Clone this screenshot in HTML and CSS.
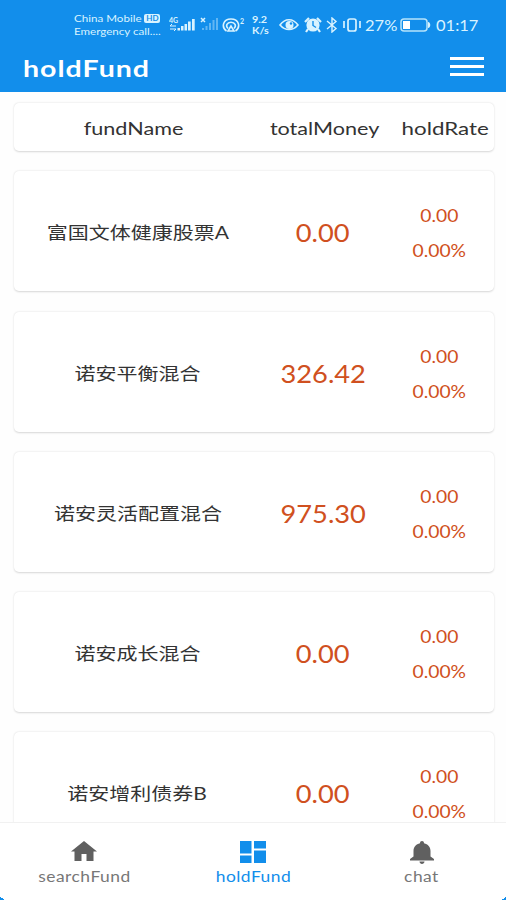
FILE: index.html
```html
<!DOCTYPE html>
<html lang="zh">

<head>
    <meta charset="UTF-8">
    <meta name="viewport" content="width=device-width, initial-scale=1.0">
    <title>holdFund</title>
    <link rel="stylesheet" href="styles.css">
</head>

<body>
    <header class="app-header">
        <div class="status-bar">
            <div class="carrier">
                <div class="carrier-line"><span class="t">China Mobile</span><b class="hd">HD</b></div>
                <div class="carrier-line"><span class="t">Emergency call....</span></div>
            </div>
            <svg class="signal" width="27" height="16" viewBox="0 0 27 16">
                <text x="0" y="6">4G</text>
                <path d="M1 9h6M1 9l2-2M7 12H1M7 12l-2 2" fill="none" stroke="#d9f3ff" />
                <path d="M8.500 11h2.500v2.500H8.500zM12 9h2.500v4.500H12zM15.500 7H18v6.500h-2.500zM19 4.500h2.700v9H19zM23 2h2.700v11.500H23z" />
            </svg>
            <svg class="signal-off" width="18" height="16" viewBox="0 0 18 16">
                <path d="M1 1l4 4M5 1L1 5" fill="none" stroke="#d9f3ff" stroke-width="1.500" />
                <path opacity=".4" d="M2 11h2v2H2zM5.500 9h2v4h-2zM9 6h2v7H9zM12.500 3h2v10h-2zM16 1h2v12h-2z" />
            </svg>
            <svg class="hotspot" width="23" height="16" viewBox="0 0 23 16">
                <g fill="none" stroke="#d9f3ff" stroke-width="1.600">
                    <path d="M4.500 14C-1 10 1 2 9 2s10 8 4.500 12" />
                    <path d="M6 11.500C3.200 9 5 5.300 9 5.300s5.800 3.700 3 6.200" />
                    <path d="M9 9l-3 5h6z" />
                </g>
                <text x="18" y="7">2</text>
            </svg>
            <div class="speed"><span class="t">9.2</span><span class="t">K/s</span></div>
            <svg class="eye" width="20" height="14" viewBox="0 0 20 14">
                <path d="M1 7c5-7 13-7 18 0-5 6-13 6-18 0z" fill="none" stroke="#d9f3ff" stroke-width="1.600" />
                <circle cx="10.500" cy="7" r="4" />
                <circle cx="12" cy="5.500" r="1.200" fill="#128eeb" />
            </svg>
            <svg class="alarm" width="18" height="16" viewBox="0 0 18 16">
                <circle cx="9" cy="8" r="6.600" />
                <path d="M1 5l4-4M17 5l-4-4M4 12l-2 3M14 12l2 3" stroke="#d9f3ff" stroke-width="2.200" />
                <path d="M9 4v4.500l3 2" fill="none" stroke="#128eeb" stroke-width="1.400" />
            </svg>
            <svg class="bluetooth" width="12" height="16" viewBox="0 0 12 16">
                <path d="M1 4l9 7.500L6 15V1l4 3.500L1 12" fill="none" stroke="#d9f3ff" stroke-width="1.400" />
            </svg>
            <svg class="vibrate" width="18" height="16" viewBox="0 0 18 16">
                <rect x="5" y="2" width="8" height="12" rx="2" fill="none" stroke="#d9f3ff" stroke-width="1.700" />
                <path d="M1 4v7M17 4v7" stroke="#d9f3ff" stroke-width="1.700" />
            </svg>
            <span class="percent t">27%</span>
            <svg class="battery" width="31" height="14" viewBox="0 0 31 14">
                <rect x="1" y="1" width="26" height="12" rx="3" fill="none" stroke="#b5e3fb" stroke-width="1.500" />
                <path d="M3 3h7v8H3z" fill="#fff" />
                <path d="M28 4c3 0 3 6 0 6z" />
            </svg>
            <span class="clock t">01:17</span>
        </div>
        <div class="title-bar">
            <h1><span class="t">holdFund</span></h1>
            <div class="menu"><i></i><i></i><i></i></div>
        </div>
    </header>

    <main class="content">
        <div class="card table-head">
            <span class="t">fundName</span>
            <span class="t">totalMoney</span>
            <span class="t">holdRate</span>
        </div>

        <div class="card fund">
            <span class="name t">富国文体健康股票A</span>
            <span class="money t">0.00</span>
            <div class="rate"><span class="t">0.00</span><span class="t">0.00%</span></div>
        </div>
        <div class="card fund">
            <span class="name t">诺安平衡混合</span>
            <span class="money t">326.42</span>
            <div class="rate"><span class="t">0.00</span><span class="t">0.00%</span></div>
        </div>
        <div class="card fund">
            <span class="name t">诺安灵活配置混合</span>
            <span class="money t">975.30</span>
            <div class="rate"><span class="t">0.00</span><span class="t">0.00%</span></div>
        </div>
        <div class="card fund">
            <span class="name t">诺安成长混合</span>
            <span class="money t">0.00</span>
            <div class="rate"><span class="t">0.00</span><span class="t">0.00%</span></div>
        </div>
        <div class="card fund">
            <span class="name t">诺安增利债券B</span>
            <span class="money t">0.00</span>
            <div class="rate"><span class="t">0.00</span><span class="t">0.00%</span></div>
        </div>
    </main>

    <nav class="tab-bar">
        <a class="tab">
            <svg width="26" height="20" viewBox="0 0 26 20">
                <path d="M13 0L0 10.500h3.500V20h7v-7h5v7h7v-9.500H26z" />
            </svg>
            <span class="t">searchFund</span>
        </a>
        <a class="tab active">
            <svg width="26" height="22" viewBox="0 0 26 22">
                <path d="M0 0h11.500v12.500H0zM0 14.500h11.500V22H0zM14 0h12v7.500H14zM14 9.500h12V22H14z" />
            </svg>
            <span class="t">holdFund</span>
        </a>
        <a class="tab">
            <svg width="24" height="23" viewBox="0 0 24 23">
                <path d="M12 0c-1.200 0-2 .8-2 2.200C6 3 3.500 6 3.500 10v5.500L0 18v1.500h24V18l-3.500-2.500V10c0-4-2.500-7-6.500-7.800C14 .8 13.200 0 12 0zM9.500 20.500h5c0 3.300-5 3.300-5 0z" />
            </svg>
            <span class="t">chat</span>
        </a>
    </nav>
</body>

</html>
```
FILE: styles.css
```css
:root {
    --primary-color: #128eeb;
    --status-color: #d9f3ff;
    --money-color: #d05020;
    --text-color: #333;
    --light-text: #777;
}

* {
    box-sizing: border-box;
}

body {
    font-family: Lato, "Noto Sans CJK SC", sans-serif;
    margin: 0;
    height: 900px;
    overflow: hidden;
    display: flex;
    flex-direction: column;
    background-color: #fefefe;
    color: var(--text-color);
}

/* 加宽字形 */
.t {
    display: inline-block;
    white-space: nowrap;
    transform: scaleX(1.2);
}

.app-header {
    height: 92px;
    flex: none;
    background-color: var(--primary-color);
    color: var(--status-color);
}

.status-bar {
    height: 50px;
    padding-left: 74px;
    display: flex;
    align-items: center;
}

.status-bar svg {
    flex: none;
    fill: var(--status-color);
}

.status-bar text {
    font-size: 7px;
    font-weight: 700;
}

.status-bar .t {
    transform-origin: left;
}

.carrier {
    width: 95px;
    flex: none;
    font-size: 10px;
    line-height: 13px;
}

.carrier-line {
    display: flex;
    align-items: center;
}

.carrier-line .t {
    transform: scaleX(1.16);
}

.hd {
    margin-left: 12px;
    padding: 0 2px;
    border-radius: 2px;
    background-color: var(--status-color);
    color: var(--primary-color);
    font-size: 8px;
    line-height: 9px;
}

.signal-off {
    margin-left: 4px;
}

.hotspot {
    margin-left: 4px;
}

.speed {
    width: 21px;
    margin-left: 7px;
    display: flex;
    flex-direction: column;
    font-size: 9px;
    font-weight: 700;
    line-height: 11px;
}

.eye {
    margin-left: 6px;
}

.alarm {
    margin-left: 5px;
}

.bluetooth {
    margin-left: 4px;
}

.vibrate {
    margin-left: 5px;
}

.status-bar .percent {
    width: 32px;
    margin-left: 4px;
    font-size: 15px;
    transform: scaleX(1.1);
}

.battery {
    margin-left: 3px;
}

.status-bar .clock {
    margin-left: 5px;
    font-size: 15px;
    transform: scaleX(1.1);
}

.title-bar {
    height: 36px;
    padding: 0 22px 0 23px;
    display: flex;
    align-items: center;
    justify-content: space-between;
    color: #fff;
}

h1 {
    margin: 0;
    font-size: 23px;
    line-height: 36px;
    font-weight: 700;
    letter-spacing: 0.8px;
}

h1 .t {
    transform-origin: left;
    transform: scaleX(1.24);
}

.menu {
    width: 34px;
    margin-bottom: 4px;
    display: flex;
    flex-direction: column;
    gap: 5px;
}

.menu i {
    height: 3px;
    background-color: #fff;
}

.content {
    flex: 1;
    min-height: 0;
    padding: 11px 12px 0 14px;
    overflow: hidden;
}

.card {
    display: grid;
    align-items: center;
    justify-items: center;
    background-color: #fff;
    border-radius: 5px;
    box-shadow: 0 0.5px 2px rgba(0, 0, 0, 0.16);
}

.table-head {
    height: 48px;
    padding-top: 1px;
    grid-template-columns: 240px 142px 98px;
    font-size: 18px;
}

.table-head .t:last-child {
    transform: scaleX(1.24);
}

.fund {
    height: 120px;
    margin-top: 20.3px;
    grid-template-columns: 247px 124px 109px;
}

.name {
    font-size: 17.5px;
    padding-top: 1px;
}

.money {
    color: var(--money-color);
    font-size: 25px;
    padding-top: 2px;
    transform: scaleX(1.09);
}

.rate {
    display: flex;
    flex-direction: column;
    align-items: center;
    color: var(--money-color);
    font-size: 17.5px;
    line-height: 35px;
    padding-top: 4px;
}

.rate .t {
    transform: scaleX(1.1);
}

.tab-bar {
    position: relative;
    height: 78px;
    flex: none;
    display: grid;
    grid-template-columns: repeat(3, 1fr);
    background-color: #fff;
    border-top: 1px solid #f1f1f1;
}

/* 屏幕底部圆角 */
.tab-bar::before,
.tab-bar::after {
    content: "";
    position: absolute;
    bottom: 0;
    width: 5px;
    height: 3px;
}

.tab-bar::before {
    left: 0;
    background: linear-gradient(to top right, var(--primary-color) 50%, transparent 50%);
}

.tab-bar::after {
    right: 0;
    background: linear-gradient(to top left, var(--primary-color) 50%, transparent 50%);
}

.tab {
    display: flex;
    flex-direction: column;
    align-items: center;
    justify-content: space-between;
    padding: 18px 0 13px;
    color: var(--light-text);
    font-size: 14.5px;
    letter-spacing: 0.4px;
    line-height: 20px;
}

.tab svg {
    fill: #606060;
}

.tab.active,
.tab.active svg {
    color: var(--primary-color);
    fill: var(--primary-color);
}
```
